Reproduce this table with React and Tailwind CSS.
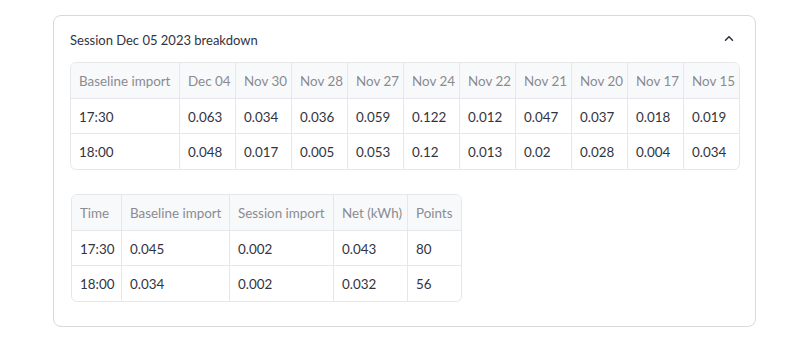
import React from 'react';

const dates = ['Dec 04', 'Nov 30', 'Nov 28', 'Nov 27', 'Nov 24', 'Nov 22', 'Nov 21', 'Nov 20', 'Nov 17', 'Nov 15'];

const baselineRows = [
  ['17:30', '0.063', '0.034', '0.036', '0.059', '0.122', '0.012', '0.047', '0.037', '0.018', '0.019'],
  ['18:00', '0.048', '0.017', '0.005', '0.053', '0.12', '0.013', '0.02', '0.028', '0.004', '0.034'],
];

const summaryHead = ['Time', 'Baseline import', 'Session import', 'Net (kWh)', 'Points'];
const summaryRows = [
  ['17:30', '0.045', '0.002', '0.043', '80'],
  ['18:00', '0.034', '0.002', '0.032', '56'],
];

// one bordered data grid, columns given as a grid template
const DataGrid = ({ head, rows, cols, width }) => (
  <div className={`${width} overflow-hidden rounded-md border border-[#e6e7ea]`}>
    <div className={`grid ${cols} bg-[#f8f9fb] text-[#8a8b91]`}>
      {head.map((h, i) => (
        <div
          key={h}
          className={`flex h-9 items-center px-2 pt-[2px] whitespace-nowrap border-b border-[#e6e7ea] ${i < head.length - 1 ? 'border-r' : ''}`}
        >
          {h}
        </div>
      ))}
    </div>
    {rows.map((row, r) => (
      <div key={r} className={`grid ${cols} text-[#31333f]`}>
        {row.map((cell, i) => (
          <div
            key={i}
            className={`flex h-[35px] items-center px-2 pt-[2px] whitespace-nowrap border-[#e6e7ea] ${i < row.length - 1 ? 'border-r' : ''} ${r < rows.length - 1 ? 'border-b' : ''}`}
          >
            {cell}
          </div>
        ))}
      </div>
    ))}
  </div>
);

export default function App() {
  return (
    <div className="h-[362px] w-[800px] bg-white pt-[15px] pl-[53px] font-['Source_Sans_Pro','Lato',sans-serif] text-[13.4px]">
      <div className="w-[703px] rounded-lg border border-[#d9d9dc]">
        <div className="flex h-[46px] items-center justify-between pl-4 pr-[19px] text-[13px] text-[#31333f]">
          <span className="pt-[3px]">Session Dec 05 2023 breakdown</span>
          <svg width="14" height="14" viewBox="0 0 24 24" fill="none" stroke="#31333f" strokeWidth="2.6" strokeLinecap="round" strokeLinejoin="round">
            <path d="M6 14l6-6 6 6" />
          </svg>
        </div>
        <div className="flex flex-col gap-6 px-4 pb-6">
          <DataGrid
            head={['Baseline import', ...dates]}
            rows={baselineRows}
            cols="grid-cols-[109px_repeat(9,56px)_55px]"
            width="w-[670px]"
          />
          <DataGrid
            head={summaryHead}
            rows={summaryRows}
            cols="grid-cols-[50px_108px_104px_74px_53px]"
            width="w-[391px] ml-px"
          />
        </div>
      </div>
    </div>
  );
}
